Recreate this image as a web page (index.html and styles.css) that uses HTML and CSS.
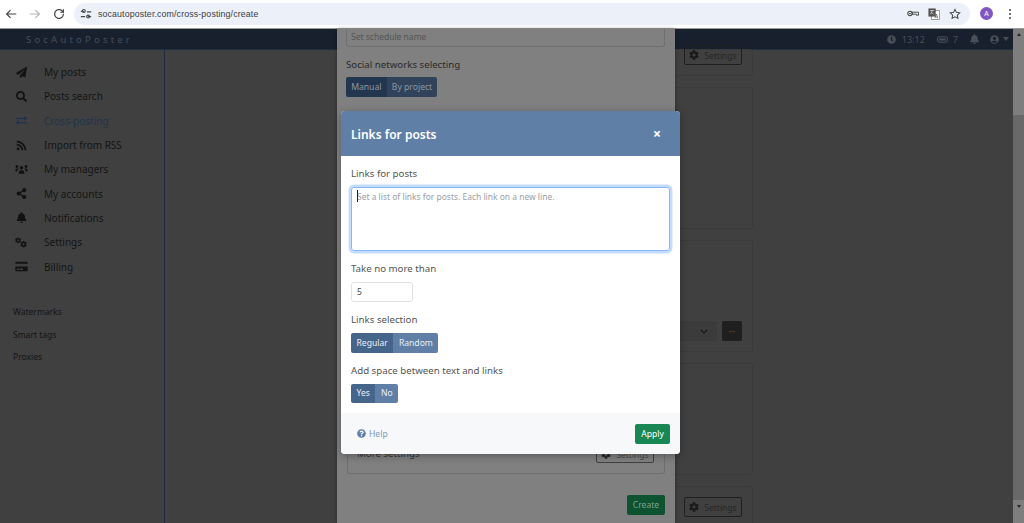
FILE: index.html
```html
<!DOCTYPE html>
<html lang="en">
<head>
<meta charset="utf-8">
<title>Links for posts</title>
<link rel="stylesheet" href="styles.css">
</head>
<body>
<svg class="defs" width="0" height="0" aria-hidden="true">
  <symbol id="i-cog" viewBox="0 0 512 512"><path d="M487.4 315.7l-42.6-24.6c4.3-23.2 4.3-47 0-70.2l42.6-24.6c4.9-2.8 7.1-8.6 5.5-14-11.1-35.6-30-67.8-54.7-94.6-3.8-4.1-10-5.1-14.8-2.3L380.8 110c-17.9-15.4-38.5-27.3-60.8-35.1V25.8c0-5.6-3.9-10.5-9.4-11.7-36.7-8.2-74.3-7.8-109.2 0-5.5 1.2-9.4 6.1-9.4 11.7V75c-22.2 7.9-42.8 19.8-60.8 35.1L88.7 85.5c-4.9-2.8-11-1.9-14.8 2.3-24.7 26.7-43.6 58.9-54.7 94.6-1.7 5.4.6 11.2 5.5 14L67.3 221c-4.3 23.2-4.3 47 0 70.2l-42.6 24.6c-4.9 2.8-7.1 8.6-5.5 14 11.1 35.6 30 67.8 54.7 94.6 3.8 4.1 10 5.1 14.8 2.3l42.6-24.6c17.9 15.4 38.5 27.3 60.8 35.1v49.2c0 5.6 3.9 10.5 9.4 11.7 36.7 8.2 74.3 7.8 109.2 0 5.5-1.2 9.4-6.1 9.4-11.7v-49.2c22.2-7.9 42.8-19.8 60.8-35.1l42.6 24.6c4.9 2.8 11 1.9 14.8-2.3 24.7-26.7 43.6-58.9 54.7-94.6 1.5-5.5-.7-11.3-5.6-14.1zM256 336c-44.1 0-80-35.9-80-80s35.9-80 80-80 80 35.9 80 80-35.9 80-80 80z"/></symbol>
  <symbol id="i-bell" viewBox="0 0 448 512"><path d="M224 512c35.32 0 63.97-28.65 63.97-64H160.03c0 35.35 28.65 64 63.97 64zm215.39-149.71c-19.32-20.76-55.47-51.99-55.47-154.29 0-77.7-54.48-139.9-127.94-155.16V32c0-17.67-14.32-32-31.98-32s-31.98 14.33-31.98 32v20.84C118.56 68.1 64.08 130.3 64.08 208c0 102.3-36.15 133.53-55.47 154.29-6 6.45-8.66 14.16-8.61 21.71.11 16.4 12.98 32 32.1 32h383.8c19.12 0 32-15.6 32.1-32 .05-7.55-2.61-15.27-8.61-21.71z"/></symbol>
</svg>

<header class="browser">
  <div class="browser-nav">
    <svg class="b-icon" viewBox="0 0 16 16"><path d="M14 8H3M7.5 3.5L3 8l4.5 4.5" fill="none" stroke="#474747" stroke-width="1.4"/></svg>
    <svg class="b-icon" viewBox="0 0 16 16"><path d="M2 8h11M8.500 3.500L13 8l-4.500 4.500" fill="none" stroke="#b4b6b8" stroke-width="1.400"/></svg>
    <svg class="b-icon" viewBox="0 0 16 16"><path d="M13 8a5 5 0 1 1-1.500-3.500L13 6V2.500M13 6H9.500" fill="none" stroke="#474747" stroke-width="1.400"/></svg>
  </div>
  <div class="omnibox">
    <span class="tune"><svg viewBox="0 0 14 14"><path d="M1 4h4M8 4.500h5M1 10h5M9 10h4" stroke="#474747" stroke-width="1.300" fill="none"/><circle cx="4.500" cy="3.500" r="1.700" fill="none" stroke="#474747" stroke-width="1.200"/><circle cx="9.500" cy="10" r="1.700" fill="none" stroke="#474747" stroke-width="1.200"/></svg></span>
    <span class="url">socautoposter.com/cross-posting/create</span>
    <span class="omni-icons">
      <svg class="o-key" viewBox="0 0 14 8"><circle cx="3.500" cy="4" r="2.600" fill="none" stroke="#474747" stroke-width="1.300"/><circle cx="3.500" cy="4" r="1" fill="#474747"/><path d="M6 2.500h7.500v3.500H11V4.800H6z" fill="none" stroke="#474747" stroke-width="1.100"/></svg>
      <svg class="o-tr" viewBox="0 0 14 14"><rect x="4" y="3" width="9.500" height="10.500" fill="#fff" stroke="#777" stroke-width=".8"/><rect x="0.500" y="0.500" width="8.500" height="9.500" fill="#555"/><path d="M2.500 3h4.500M4.700 3c0 2-1 3.500-2 4M4 5c.7 1 1.500 1.700 2.500 2.200" stroke="#fff" stroke-width=".7" fill="none"/><path d="M8 12l1.800-5 1.800 5M8.600 10.500h2.400" stroke="#555" stroke-width=".8" fill="none"/></svg>
      <svg class="o-star" viewBox="0 0 14 14"><path d="M7 1.600l1.650 3.500 3.850.5-2.800 2.650.7 3.800L7 10.200 3.600 12.050l.7-3.800L1.500 5.600l3.850-.5z" fill="none" stroke="#474747" stroke-width="1.200"/></svg>
    </span>
  </div>
  <div class="browser-end">
    <span class="avatar">A</span>
    <span class="kebab"><i></i><i></i><i></i></span>
  </div>
</header>

<div class="viewport">
  <div class="app">
    <nav class="topbar">
      <span class="brand">SocAutoPoster</span>
      <span class="top-items">
        <svg class="t-icon" viewBox="0 0 512 512"><path d="M256 8C119 8 8 119 8 256s111 248 248 248 248-111 248-248S393 8 256 8zm57.100 350.100L224.900 294c-3.100-2.300-4.900-5.900-4.900-9.700V116c0-6.600 5.400-12 12-12h48c6.600 0 12 5.400 12 12v137.700l63.500 46.200c5.400 3.900 6.500 11.400 2.600 16.800l-28.200 38.800c-3.900 5.300-11.400 6.500-16.800 2.600z"/></svg>
        <span class="t-text t-time">13:12</span>
        <svg class="t-ticket" viewBox="0 0 20 12"><rect x="1" y="1" width="18" height="10" rx="3.500" fill="none" stroke="#4a4f57" stroke-width="2"/><rect x="4" y="4" width="12" height="4" fill="#4a4f57"/></svg>
        <span class="t-text t-num">7</span>
        <svg class="t-bell"><use href="#i-bell"/></svg>
        <svg class="t-icon t-user" viewBox="0 0 496 512"><path d="M248 8C111 8 0 119 0 256s111 248 248 248 248-111 248-248S385 8 248 8zm0 96c48.600 0 88 39.400 88 88s-39.400 88-88 88-88-39.400-88-88 39.400-88 88-88zm0 344c-58.700 0-111.300-26.600-146.500-68.200 18.800-35.400 55.600-59.800 98.500-59.800 2.400 0 4.800.4 7.100 1.100 13 4.200 26.600 6.900 40.900 6.900 14.300 0 28-2.700 40.900-6.900 2.300-.7 4.700-1.100 7.100-1.100 42.900 0 79.700 24.400 98.500 59.800C359.300 421.400 306.700 448 248 448z"/></svg>
        <span class="caret"></span>
      </span>
    </nav>
    <div class="app-body">
      <aside class="sidebar">
        <ul class="menu">
          <li><svg class="m-icon" viewBox="0 0 512 512"><path d="M476 3.200L12.500 270.600c-18.100 10.400-15.800 35.600 2.200 43.200L121 358.400l287.300-253.200c5.500-4.900 13.300 2.600 8.600 8.300L176 407v80.500c0 23.600 28.500 32.900 42.500 15.800L282 426l124.600 52.200c14.200 6 30.400-2.900 33-18.200l72-432C515 7.800 493.300-6.800 476 3.200z"/></svg>My posts</li>
          <li><svg class="m-icon" viewBox="0 0 512 512"><path d="M505 442.700L405.300 343c-4.500-4.500-10.600-7-17-7H372c27.600-35.300 44-79.700 44-128C416 93.100 322.900 0 208 0S0 93.100 0 208s93.100 208 208 208c48.300 0 92.700-16.400 128-44v16.300c0 6.400 2.500 12.500 7 17l99.700 99.700c9.400 9.400 24.600 9.400 33.900 0l28.300-28.300c9.400-9.400 9.400-24.600.1-34zM208 336c-70.700 0-128-57.200-128-128 0-70.700 57.200-128 128-128 70.700 0 128 57.200 128 128 0 70.700-57.200 128-128 128z"/></svg>Posts search</li>
          <li class="active"><svg class="m-icon" viewBox="0 0 512 512"><path d="M0 168v-16c0-13.255 10.745-24 24-24h360V80c0-21.367 25.899-32.042 40.971-16.971l80 80c9.372 9.373 9.372 24.569 0 33.941l-80 80C409.956 271.982 384 261.456 384 240v-48H24c-13.255 0-24-10.745-24-24zm488 152H128v-48c0-21.314-25.862-32.080-40.971-16.971l-80 80c-9.372 9.373-9.372 24.569 0 33.941l80 80C102.057 463.997 128 453.437 128 432v-48h360c13.255 0 24-10.745 24-24v-16c0-13.255-10.745-24-24-24z"/></svg>Cross-posting</li>
          <li><svg class="m-icon" viewBox="0 0 512 512"><path transform="translate(32 0)" d="M128.081 415.959c0 35.369-28.672 64.041-64.041 64.041S0 451.328 0 415.959s28.672-64.041 64.041-64.041 64.040 28.673 64.040 64.041zm175.660 47.250c-8.354-154.600-132.185-278.587-286.950-286.950C7.656 175.765 0 183.105 0 192.253v48.069c0 8.415 6.490 15.472 14.887 16.018 111.832 7.284 201.473 96.702 208.772 208.772.547 8.397 7.604 14.887 16.018 14.887h48.069c9.149.001 16.489-7.655 15.995-16.790zm144.249.288C439.596 229.677 251.465 40.445 16.503 32.010 7.473 31.686 0 38.981 0 48.016v48.068c0 8.625 6.835 15.645 15.453 15.999 191.179 7.839 344.627 161.316 352.465 352.465.353 8.618 7.373 15.453 15.999 15.453h48.068c9.034-.001 16.329-7.474 16.005-16.504z"/></svg>Import from RSS</li>
          <li><svg class="m-icon" viewBox="0 0 640 512"><circle cx="320" cy="170" r="85"/><circle cx="95" cy="110" r="70"/><circle cx="545" cy="110" r="70"/><path d="M180 440c0-90 50-150 100-150h80c50 0 100 60 100 150v30H180zM20 300c0-60 30-95 75-95h50c15 0 30 5 40 15-40 25-70 75-75 130H20zM620 300c0-60-30-95-75-95h-50c-15 0-30 5-40 15 40 25 70 75 75 130h90z"/></svg>My managers</li>
          <li><svg class="m-icon m-share" viewBox="0 0 448 512"><path d="M352 320c-22.608 0-43.387 7.819-59.790 20.895l-102.486-64.054a96.551 96.551 0 0 0 0-41.683l102.486-64.054C308.613 184.181 329.392 192 352 192c53.019 0 96-42.981 96-96S405.019 0 352 0s-96 42.981-96 96c0 7.158.79 14.130 2.276 20.841L155.790 180.895C139.387 167.819 118.608 160 96 160c-53.019 0-96 42.981-96 96s42.981 96 96 96c22.608 0 43.387-7.819 59.790-20.895l102.486 64.054A96.301 96.301 0 0 0 256 416c0 53.019 42.981 96 96 96s96-42.981 96-96-42.981-96-96-96z"/></svg>My accounts</li>
          <li><svg class="m-icon"><use href="#i-bell"/></svg>Notifications</li>
          <li><svg class="m-icon" viewBox="0 0 640 512"><use href="#i-cog" x="0" y="0" width="300" height="300"/><use href="#i-cog" x="250" y="170" width="340" height="340"/></svg>Settings</li>
          <li><svg class="m-icon" viewBox="0 0 576 512"><path d="M0 432c0 26.500 21.500 48 48 48h480c26.500 0 48-21.500 48-48V256H0v176zm192-68c0-6.600 5.400-12 12-12h136c6.600 0 12 5.400 12 12v40c0 6.600-5.400 12-12 12H204c-6.600 0-12-5.400-12-12v-40zm-128 0c0-6.600 5.400-12 12-12h72c6.600 0 12 5.400 12 12v40c0 6.600-5.400 12-12 12H76c-6.600 0-12-5.400-12-12v-40zM576 80v48H0V80c0-26.500 21.500-48 48-48h480c26.500 0 48 21.500 48 48z"/></svg>Billing</li>
        </ul>
        <ul class="submenu">
          <li>Watermarks</li>
          <li>Smart tags</li>
          <li>Proxies</li>
        </ul>
      </aside>
      <main class="main">
        <section class="bg-card card-a"><span class="bg-btn"><svg class="btn-cog"><use href="#i-cog"/></svg>Settings</span></section>
        <section class="bg-card card-b"></section>
        <section class="bg-card card-c"><span class="bg-select"><svg viewBox="0 0 10 6"><path d="M1 1l4 4 4-4" fill="none" stroke="#111" stroke-width="1.300"/></svg></span><span class="bg-more">...</span></section>
        <section class="bg-card card-d"></section>
        <section class="bg-card card-e"><span class="bg-btn"><svg class="btn-cog"><use href="#i-cog"/></svg>Settings</span></section>
      </main>
    </div>
  </div>

  <div class="scrollbar">
    <span class="arrow-up"></span>
    <span class="thumb"></span>
    <span class="arrow-down"></span>
  </div>

  <div class="panel">
    <div class="p-input">Set schedule name</div>
    <div class="p-label">Social networks selecting</div>
    <div class="group p-group"><span class="seg on">Manual</span><span class="seg">By project</span></div>
    <div class="p-spacer"></div>
    <div class="p-more"><span class="p-more-text">More settings</span><span class="p-more-btn"><svg class="btn-cog"><use href="#i-cog"/></svg>Settings</span></div>
    <div class="p-foot"><span class="create">Create</span></div>
  </div>

  <div class="modal">
    <div class="m-head"><span class="m-title">Links for posts</span><span class="m-close">×</span></div>
    <div class="m-body">
      <div class="label">Links for posts</div>
      <div class="textarea"><span class="cursor"></span>Set a list of links for posts. Each link on a new line.</div>
      <div class="label l-take">Take no more than</div>
      <div class="number">5</div>
      <div class="label l-sel">Links selection</div>
      <div class="group"><span class="seg on">Regular</span><span class="seg">Random</span></div>
      <div class="label l-sp">Add space between text and links</div>
      <div class="group"><span class="seg on">Yes</span><span class="seg">No</span></div>
    </div>
    <div class="m-foot">
      <span class="help"><svg viewBox="0 0 512 512"><path d="M504 256c0 136.997-111.043 248-248 248S8 392.997 8 256C8 119.083 119.043 8 256 8s248 111.083 248 248zM262.655 90c-54.497 0-89.255 22.957-116.549 63.758-3.536 5.286-2.353 12.415 2.715 16.258l34.699 26.310c5.205 3.947 12.621 3.008 16.665-2.122 17.864-22.658 30.113-35.797 57.303-35.797 20.429 0 45.698 13.148 45.698 32.958 0 14.976-12.363 22.667-32.534 33.976C247.128 238.528 216 254.941 216 296v4c0 6.627 5.373 12 12 12h56c6.627 0 12-5.373 12-12v-1.333c0-28.462 83.186-29.647 83.186-106.667 0-58.002-60.165-102-116.531-102zM256 338c-25.365 0-46 20.635-46 46 0 25.364 20.635 46 46 46s46-20.636 46-46c0-25.365-20.635-46-46-46z"/></svg>Help</span>
      <span class="apply">Apply</span>
    </div>
  </div>
</div>
</body>
</html>
```

FILE: styles.css
```css
* { box-sizing: border-box; }
html, body { margin: 0; padding: 0; }
body {
  width: 1024px; height: 523px; overflow: hidden;
  display: flex; flex-direction: column;
  font-family: "Noto Sans", "Open Sans", sans-serif;
  font-size: 10px; background: #404040;
}
.defs { position: absolute; }
ul { list-style: none; margin: 0; padding: 0; }

/* browser chrome */
.browser {
  height: 29px; flex: none; background: #fff; display: flex; align-items: center;
  border-bottom: 1px solid #9a9a9a; padding: 0 0 1px 3px;
}
.browser-nav { display: flex; gap: 10px; width: 71px; padding-left: 1px; }
.b-icon { width: 14px; height: 14px; }
.omnibox {
  width: 896px; height: 22px; background: #ebf0f9; border-radius: 11px;
  display: flex; align-items: center; padding: 0 9px 0 5px;
}
.tune { width: 14px; height: 14px; display: flex; margin-right: 4px; margin-left: 0; }
.tune svg { width: 12px; height: 12px; margin: 1px; }
.url { font-family: "Liberation Sans", sans-serif; font-size: 8.800px; color: #3c4043; letter-spacing: .13px; margin-left: 1px; }
.omni-icons { margin-left: auto; display: flex; align-items: center; gap: 8px; }
.o-key { width: 12px; height: 7px; margin-right: 1px; }
.o-tr { width: 12px; height: 12px; }
.o-star { width: 12px; height: 12px; margin-left: 1px; }
.browser-end { flex: 1; display: flex; align-items: center; padding-left: 10px; }
.avatar {
  width: 13px; height: 13px; border-radius: 50%; background: #7e57c2; color: #fff;
  font-size: 7px; text-align: center; line-height: 13px;
}
.kebab { margin-left: 16px; display: flex; flex-direction: column; gap: 2px; }
.kebab i { width: 2px; height: 2px; background: #444; border-radius: 50%; display: block; }

/* underlying app */
.viewport { flex: 1; min-height: 0; position: relative; display: flex; }
.app { flex: 1; min-width: 0; display: flex; flex-direction: column; }
.topbar {
  height: 21px; flex: none; background: #18202d; display: flex; align-items: center;
  justify-content: space-between; padding: 0 4px 0 26px; border-bottom: 1px solid #1f2d40;
}
.brand { color: #444d59; font-size: 9.500px; letter-spacing: 3.200px; }
.top-items { display: flex; align-items: center; color: #4a4f57; font-size: 9px; }
.top-items svg { fill: #4a4f57; }
.t-icon { width: 9px; height: 9px; }
.t-text { color: #4a4f57; }
.t-time { margin-left: 6px; }
.t-ticket { width: 11px; height: 7px; margin-left: 12px; }
.t-num { margin-left: 5px; }
.t-bell { width: 9px; height: 10px; margin-left: 12px; }
.t-user { margin-left: 11px; }
.caret { margin-left: 4px; border: 3px solid transparent; border-top: 4px solid #4a4f57; border-bottom: 0; }
.app-body { flex: 1; min-height: 0; display: flex; }
.sidebar { width: 165px; flex: none; border-right: 1px solid #1f2a3c; padding-top: 10px; background: #404040; }
.menu li {
  height: 24.300px; display: flex; align-items: center; padding-left: 15px;
  color: #141414; font-size: 10px;
}
.menu li.active { color: #1f344c; }
.menu li.active .m-icon { fill: #1f344c; }
.m-icon { width: 13px; height: 11px; fill: #121212; margin-right: 16px; flex: none; }
.submenu { margin-top: 22px; }
.submenu li { height: 22.400px; display: flex; align-items: center; padding-left: 13px; color: #141414; font-size: 8.500px; }
.main { flex: 1; min-width: 0; display: flex; flex-direction: column; gap: 11px; padding-left: 235px; background: #404040; }
.bg-card {
  width: 353px; flex: none; border: 1px solid #3a3a3a; border-radius: 3px;
  display: flex; align-items: center; justify-content: flex-end; padding-right: 10px;
}
.card-a { height: 27px; margin-top: -1px; align-items: flex-end; padding-bottom: 10px; }
.card-b { height: 142px; }
.card-c { height: 112px; align-items: flex-end; padding-bottom: 10px; gap: 5px; }
.card-d { height: 112px; }
.card-e { height: 50px; align-items: flex-start; padding-top: 10px; }
.bg-btn {
  width: 58px; height: 20px; border: 1px solid #1f1f1f; border-radius: 2px; color: #262626;
  font-size: 8.500px; display: flex; align-items: center; justify-content: center; gap: 5px;
}
.btn-cog { width: 10px; height: 10px; fill: #1a1a1a; }
.bg-select { width: 40px; height: 20px; background: #3b3b3b; border-radius: 0 2px 2px 0; display: flex; align-items: center; justify-content: flex-end; padding-right: 9px; }
.bg-select svg { width: 8px; height: 5px; }
.bg-more { width: 20px; height: 20px; background: #1f1f1f; color: #666; font-size: 8px; text-align: center; line-height: 16px; border-radius: 2px; }

.scrollbar { width: 11px; flex: none; background: #7e7e7e; display: flex; flex-direction: column; align-items: center; }
.arrow-up { margin-top: 4px; border: 2.500px solid transparent; border-bottom: 3px solid #262626; border-top: 0; }
.thumb { width: 100%; height: 385px; margin-top: 79px; background: #696969; }
.arrow-down { margin-top: 5px; border: 2.500px solid transparent; border-top: 3px solid #262626; border-bottom: 0; }

/* first modal */
.panel {
  position: absolute; left: 337px; top: 0; width: 338px; height: 494px; overflow: hidden;
  background: #808080; padding: 0 10px 0 9px; display: flex; flex-direction: column;
  box-shadow: 0 0 4px rgba(0,0,0,.35);
}
.p-input {
  height: 18px; flex: none; border: 1px solid #6f6f6f; border-top: 0; border-radius: 0 0 3px 3px;
  padding: 1px 4px 0; color: #555; font-size: 8.500px; line-height: 14px;
}
.p-label { margin-top: 11px; color: #2a2a2a; font-size: 9.700px; line-height: 14px; }
.group { display: inline-flex; align-self: flex-start; height: 19.500px; border-radius: 2px; overflow: hidden; }
.seg { background: #5f7fa6; color: #e9eef5; font-size: 8.600px; padding: 0 5.500px; display: flex; align-items: center; }
.seg.on { background: #46658a; }
.p-group { margin-top: 5px; }
.p-group .seg { background: #30435a; color: #8d97a3; padding: 0 5.200px; }
.p-group .seg.on { background: #23364f; }
.p-spacer { flex: 1; }
.p-more {
  margin-left: 1px; height: 36px; border: 1px solid #6f6f6f; border-top: 0; border-radius: 0 0 3px 3px; flex: none;
  display: flex; justify-content: space-between; align-items: center; padding: 0 10px 3px 9px; color: #333;
}
.p-more-text { font-size: 9.700px; line-height: 14px; }
.p-more-btn {
  width: 58px; height: 18px; border: 1px solid #404040; border-radius: 2px; color: #4a4a4a;
  font-size: 8.500px; display: flex; align-items: center; justify-content: center; gap: 5px;
}
.p-more-btn .btn-cog { fill: #2a2a2a; }
.p-foot { height: 49px; flex: none; display: flex; justify-content: flex-end; align-items: flex-end; padding-bottom: 8px; }
.create { width: 38px; height: 20px; background: #0d5231; color: #7fa18f; font-size: 8.600px; border-radius: 2px; display: flex; align-items: center; justify-content: center; }

/* top modal */
.modal {
  position: absolute; left: 341px; top: 82px; width: 339px; height: 343px;
  background: #fff; border-radius: 4px; overflow: hidden; display: flex; flex-direction: column;
  box-shadow: 0 2px 8px rgba(0,0,0,.3);
}
.m-head {
  height: 45px; flex: none; background: #5f7fa6; color: #fff; display: flex;
  align-items: center; justify-content: space-between; padding: 1px 19px 0 10px;
}
.m-title { font-size: 12px; font-weight: 600; }
.m-close { font-size: 14px; font-weight: 700; line-height: 14px; margin-top: -1px; }
.m-body { flex: 1; padding: 11px 10px 0; display: flex; flex-direction: column; }
.label { color: #555; font-size: 9.700px; line-height: 14px; }
.textarea {
  height: 64px; margin-top: 6px; border: 1px solid #86b7fe; border-radius: 3px;
  box-shadow: 0 0 0 2.400px #c2dbfe; color: #9aa0a6; font-size: 8.460px; padding: 2px 5px; line-height: 13px; position: relative;
}
.cursor { position: absolute; left: 5px; top: 2px; width: 1px; height: 12px; background: #222; }
.l-take { margin-top: 11px; }
.number {
  width: 62px; height: 20px; margin-top: 6px; border: 1px solid #dee2e6; border-radius: 3px;
  color: #444; font-size: 8.600px; line-height: 18px; padding-left: 5px;
}
.l-sel { margin-top: 11px; }
.m-body .group { margin-top: 6px; }
.l-sp { margin-top: 11px; }
.m-foot {
  height: 41px; flex: none; background: #f6f8fa; display: flex; align-items: center;
  justify-content: space-between; padding: 0 10px 0 16px;
}
.help { color: #7e98b9; font-size: 8.600px; display: flex; align-items: center; gap: 3px; }
.help svg { width: 9px; height: 9px; fill: #5f7fa6; }
.apply {
  width: 35px; height: 20px; background: #198754; color: #fff; font-size: 8.600px; border-radius: 2px;
  display: flex; align-items: center; justify-content: center;
}
```
